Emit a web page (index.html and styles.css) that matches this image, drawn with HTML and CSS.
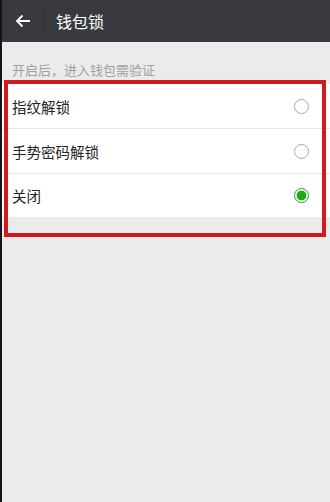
FILE: index.html
```html
<!DOCTYPE html>
<html lang="zh">
<head>
  <meta charset="UTF-8" />
  <meta name="viewport" content="width=device-width, initial-scale=1.0" />
  <title>钱包锁</title>
  <link rel="stylesheet" href="styles.css">
</head>
<body>

<div class="screen">
  <div class="topbar">
    <div class="back">
      <svg width="16" height="14" viewBox="0 0 16 14"><path d="M15 7H2M7.5 1.5L2 7l5.5 5.5" fill="none" stroke="#fff" stroke-width="1.8"/></svg>
    </div>
    <div class="divider"></div>
    <div class="title">钱包锁</div>
  </div>

  <div class="caption">开启后，进入钱包需验证</div>

  <div class="list">
    <div class="row"><span>指纹解锁</span><span class="radio"></span></div>
    <div class="row"><span>手势密码解锁</span><span class="radio"></span></div>
    <div class="row"><span>关闭</span><span class="radio checked"></span></div>
  </div>

  <!-- 标注框 -->
  <div class="mark"></div>
</div>

</body>
</html>
```

FILE: styles.css
```css
body {
  margin: 0;
  padding: 0;
  font-family: "Noto Sans CJK SC", "Liberation Sans", sans-serif;
  background-color: #ebebeb;
}

.screen {
  position: relative;
  width: 330px;
  height: 502px;
  background-color: #ebebeb;
  border-left: 2px solid #151515;
  box-sizing: border-box;
  overflow: hidden;
}

.topbar {
  height: 42px;
  background-color: #393a3f;
  display: flex;
  align-items: center;
}

.back {
  width: 40px;
  display: flex;
  justify-content: center;
  padding-left: 1px;
}

.back svg {
  display: block;
}

.divider {
  width: 1px;
  height: 26px;
  background-color: #2e2f33;
}

.title {
  margin-left: 12px;
  color: #fff;
  font-size: 16px;
}

.caption {
  padding: 20px 0 0 10px;
  height: 22px;
  font-size: 13px;
  color: #a0a0a0;
  line-height: 16px;
}

.list {
  background-color: #fff;
}

.row {
  height: 44px;
  display: flex;
  align-items: center;
  justify-content: space-between;
  padding: 0 21px 0 10px;
  font-size: 14.5px;
  color: #222;
  border-bottom: 1px solid #e5e5e5;
}

.row:last-child {
  border-bottom: none;
  height: 43px;
}

.radio {
  width: 13px;
  height: 13px;
  border: 1px solid #a8a8a8;
  border-radius: 50%;
}

.radio.checked {
  border-color: #1aad19;
  background: radial-gradient(circle, #1aad19 0 4.5px, #fff 5.2px);
}

.mark {
  position: absolute;
  left: 2px;
  top: 80px;
  width: 322px;
  height: 157px;
  border: 4px solid #cf1b1f;
  box-sizing: border-box;
}
```
